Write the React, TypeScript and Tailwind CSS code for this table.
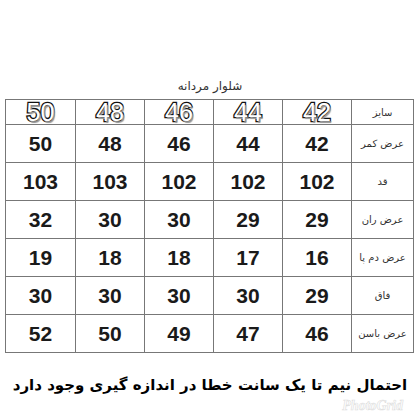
const SIZES = ["42", "44", "46", "48", "50"];

const ROWS: { label: string; values: string[] }[] = [
  { label: "عرض کمر", values: ["42", "44", "46", "48", "50"] },
  { label: "قد", values: ["102", "102", "102", "103", "103"] },
  { label: "عرض ران", values: ["29", "29", "30", "30", "32"] },
  { label: "عرض دم پا", values: ["16", "17", "18", "18", "19"] },
  { label: "فاق", values: ["29", "30", "30", "30", "30"] },
  { label: "عرض باسن", values: ["46", "47", "49", "50", "52"] },
];

const persian = "font-['DejaVu_Sans','Noto_Sans',sans-serif]";

export default function App() {
  return (
    <div className="flex h-[420px] w-[420px] flex-col bg-white pt-[78px]">
      <p dir="rtl" className={`${persian} text-center text-[12px] leading-[16px] text-[#333]`}>
        شلوار مردانه
      </p>

      <table dir="rtl" className="mx-[5px] mt-[5px] w-[409px] table-fixed border-collapse">
        <colgroup>
          <col className="w-[62px]" />
          <col className="w-[69px]" />
          <col className="w-[69px]" />
          <col className="w-[69px]" />
          <col className="w-[69px]" />
          <col className="w-[70px]" />
        </colgroup>
        <tbody>
          <tr className="h-[25px]">
            <td className={`${persian} border border-[#777] text-center text-[10px] text-[#333]`}>سایز</td>
            {SIZES.map((s) => (
              <td
                key={s}
                className="border border-[#777] text-center font-['Liberation_Sans',sans-serif] text-[25px] font-normal leading-[22px] text-white [-webkit-text-stroke:2.6px_#111] [paint-order:stroke_fill] [text-shadow:1.5px_1.5px_1px_#999]"
              >
                {s}
              </td>
            ))}
          </tr>
          {ROWS.map((r) => (
            <tr key={r.label} className="h-[38px]">
              <td className={`${persian} border border-[#777] text-center text-[10px] text-[#333]`}>{r.label}</td>
              {r.values.map((v, i) => (
                <td
                  key={i}
                  className="border border-[#777] text-center font-['Liberation_Sans',sans-serif] text-[21px] font-bold text-[#1a1a1a]"
                >
                  {v}
                </td>
              ))}
            </tr>
          ))}
        </tbody>
      </table>

      <p
        dir="rtl"
        className={`${persian} mt-[22px] text-center text-[15px] font-bold leading-[20px] text-black`}
      >
        احتمال نیم تا یک سانت خطا در اندازه گیری وجود دارد
      </p>

      <div className="flex justify-end pr-[17px]">
        <span className="font-['Liberation_Serif',serif] text-[14px] italic font-bold text-white [-webkit-text-stroke:0.6px_#ddd]">
          PhotoGrid
        </span>
      </div>
    </div>
  );
}
